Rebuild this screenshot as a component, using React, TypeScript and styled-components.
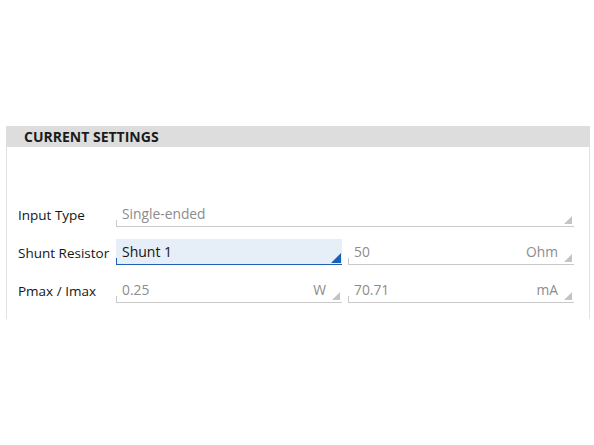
import React from "react";
import styled, { createGlobalStyle, css } from "styled-components";

const Global = createGlobalStyle`
  html, body { margin: 0; padding: 0; background: #ffffff; }
  body { font-family: "Open Sans", "Noto Sans", sans-serif; }
`;

const Page = styled.div`
  padding: 126px 4px 0 6px;
  width: 594px;
  height: 445px;
  box-sizing: border-box;
`;

const Panel = styled.section`
  border-left: 1px solid #e2e2e2;
  border-right: 1px solid #e2e2e2;
  padding-bottom: 16px;
`;

const Header = styled.div`
  height: 21px;
  background: #dddddd;
  display: flex;
  align-items: center;
  margin-left: -1px;
  margin-right: -1px;
  padding-left: 18px;
  font-size: 14px;
  font-weight: 700;
  color: #1b1b1b;
`;

const Body = styled.div`
  padding: 54px 15px 0 11px;
  display: flex;
  flex-direction: column;
  gap: 12px;
`;

const Row = styled.div`
  display: grid;
  grid-template-columns: 92px 1fr 1fr;
  column-gap: 6px;
  align-items: center;
  height: 26px;
`;

const Label = styled.div`
  font-size: 13.5px;
  color: #151515;
  white-space: nowrap;
  padding-top: 1px;
`;

const Field = styled.div<{ $active?: boolean; $wide?: boolean }>`
  position: relative;
  height: 26px;
  box-sizing: border-box;
  display: flex;
  align-items: center;
  justify-content: space-between;
  padding: 0 16px 0 6px;
  font-size: 13.8px;
  color: #8c8c8c;
  border-bottom: 1px solid #c9c9c9;
  ${(p) => p.$wide && css`grid-column: 2 / 4;`}
  &::before {
    content: "";
    position: absolute;
    left: 0;
    bottom: 0;
    width: 1px;
    height: 6px;
    background: #c9c9c9;
  }
  &::after {
    content: "";
    position: absolute;
    right: 2px;
    bottom: 2px;
    width: 0;
    height: 0;
    border-style: solid;
    border-width: 0 0 8px 8px;
    border-color: transparent transparent #c4c4c4 transparent;
  }
  ${(p) =>
    p.$active &&
    css`
      background: #e6eef8;
      color: #151515;
      font-size: 14px;
      border-bottom-color: #1d5eb6;
      &::before { background: #1d5eb6; }
      &::after {
        right: 1px;
        bottom: 1px;
        border-width: 0 0 10px 10px;
        border-color: transparent transparent #1d5eb6 transparent;
      }
    `}
`;

const Unit = styled.span`
  color: #8c8c8c;
`;

export default function App() {
  return (
    <>
      <Global />
      <Page>
        <Panel>
          <Header>CURRENT SETTINGS</Header>
          <Body>
            <Row>
              <Label>Input Type</Label>
              <Field $wide>Single-ended</Field>
            </Row>
            <Row>
              <Label>Shunt Resistor</Label>
              <Field $active>Shunt 1</Field>
              <Field>
                50<Unit>Ohm</Unit>
              </Field>
            </Row>
            <Row>
              <Label>Pmax / Imax</Label>
              <Field>
                0.25<Unit>W</Unit>
              </Field>
              <Field>
                70.71<Unit>mA</Unit>
              </Field>
            </Row>
          </Body>
        </Panel>
      </Page>
    </>
  );
}
